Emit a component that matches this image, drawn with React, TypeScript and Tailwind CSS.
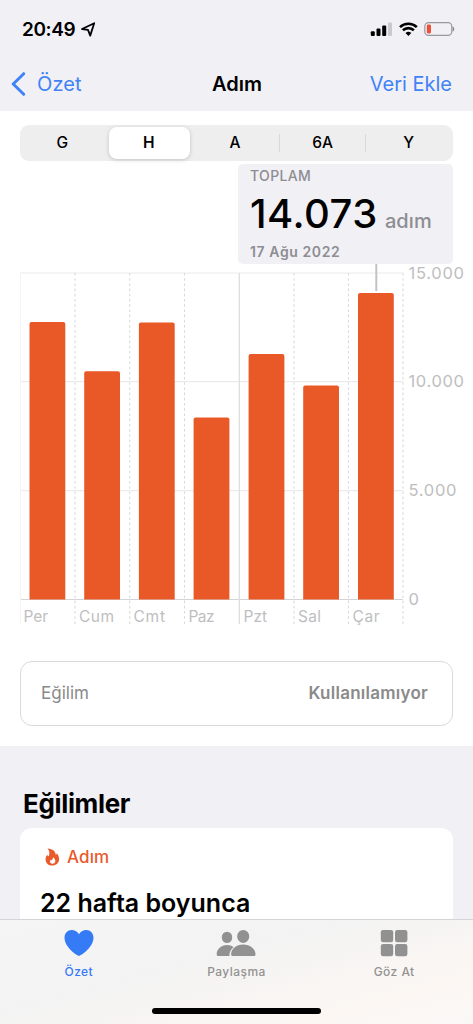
const days = [
  { name: 'Per', top: 322, left: 29.5, label: 23.5, width: 24.5 },
  { name: 'Cum', top: 371.3, left: 84.2, label: 79, width: 35 },
  { name: 'Cmt', top: 322.4, left: 138.9, label: 133.5, width: 31.5 },
  { name: 'Paz', top: 417.5, left: 193.6, label: 188.5, width: 26 },
  { name: 'Pzt', top: 354, left: 248.6, label: 243.5, width: 23.5 },
  { name: 'Sal', top: 385.5, left: 303.2, label: 298, width: 23 },
  { name: 'Çar', top: 293, left: 358, label: 352.5, width: 27 },
];

const scale = [
  { label: '15.000', y: 273, width: 55.5 },
  { label: '10.000', y: 381.7, width: 55.5 },
  { label: '5.000', y: 490.6, width: 48 },
  { label: '0', y: 599.5, width: 10 },
];

const dividers = [75, 129.7, 184.5, 294, 348.5, 403];

function StatusBar() {
  return (
    <div className="flex h-[58px] items-center justify-between pl-[22px] pr-[18px]">
      <div className="flex items-center gap-[5px]">
        <span className="text-[19px] font-semibold leading-none tracking-[-0.4px]">20:49</span>
        <svg width="16" height="16" viewBox="80 21 16 16">
          <path d="M94.200 23.200 82 29l6 .9L90.200 35.600Z" fill="none" stroke="#000" strokeWidth="1.8" strokeLinejoin="round" />
        </svg>
      </div>
      <svg width="85" height="16" viewBox="370 21 85 16">
        <rect x="370.8" y="31.2" width="4" height="4.8" rx="1.1" />
        <rect x="376.5" y="28.5" width="4" height="7.5" rx="1.1" />
        <rect x="382.2" y="25.4" width="4" height="10.6" rx="1.1" />
        <rect x="388" y="22.5" width="4" height="13.5" rx="1.1" fill="#cacace" />
        <path d="M400 27.1a12.2 12.2 0 0 1 16.8 0M402.9 30.3a8.1 8.1 0 0 1 11 0" fill="none" stroke="#000" strokeWidth="2.6" />
        <path d="M405.5 33a4.3 4.3 0 0 1 5.8 0l-2.9 2.9Z" />
        <rect x="424.8" y="22.6" width="27" height="12.8" rx="3.8" fill="none" stroke="#99999d" strokeWidth="1.2" />
        <rect x="426.8" y="24.5" width="4.2" height="9" rx="1.4" fill="#e95239" />
        <path d="M453 26.8q2 2.2 0 4.4Z" fill="#8b8b8f" stroke="#8b8b8f" strokeWidth=".7" />
      </svg>
    </div>
  );
}

function Periods() {
  return (
    <div className="mx-5 mt-3.5 grid h-9 grid-cols-5 items-center rounded-[9px] bg-[#eeeeee] text-center text-[15.5px] font-medium leading-none">
      <span className="pr-0.5">G</span>
      <span className="ml-[2px] mr-[3px] flex h-8 items-center justify-center rounded-[8px] bg-white pr-px font-semibold shadow-[0_1px_4px_rgba(0,0,0,0.18)]">H</span>
      <span className="flex h-[18px] items-center justify-center border-r border-[#d8d8da] pr-0.5">A</span>
      <span className="flex h-[18px] items-center justify-center border-r border-[#d8d8da]">6A</span>
      <span className="pr-0.5">Y</span>
    </div>
  );
}

function Chart() {
  return (
    <svg width="473" height="376" viewBox="0 264 473 376" className="block shrink-0" fontFamily="Inter, sans-serif">
      {scale.map((s) => (
        <g key={s.label}>
          <path d={`M20 ${s.y}H403`} stroke={s.label === '0' ? '#d4d4d6' : '#ebebed'} strokeWidth="1.2" />
          <text x="408.5" y={s.y + 5.7} fontSize="16.5" fill="#bebec0" textLength={s.width} lengthAdjust="spacing">{s.label}</text>
        </g>
      ))}
      <path d="M20.5 273V624" stroke="#f5f5f6" />
      {dividers.map((x) => (
        <path key={x} d={`M${x} 273V624`} stroke="#dadadd" strokeWidth="1.1" strokeDasharray="2.6 2.6" />
      ))}
      <path d="M239.3 273V624" stroke="#dededf" strokeWidth="1.3" />
      <path d="M376.3 264V291" stroke="#c2c2c5" strokeWidth="2" />
      {days.map((d) => (
        <g key={d.name}>
          <path d={`M${d.left} 599.5V${d.top + 2}q0-2 2-2h31.8q2 0 2 2V599.5Z`} fill="#e95827" />
          <text x={d.label} y="621.7" fontSize="15.5" fill="#bebec0" textLength={d.width} lengthAdjust="spacing">{d.name}</text>
        </g>
      ))}
    </svg>
  );
}

function TabBar() {
  return (
    <nav className="h-[105px] shrink-0 border-t border-[#d5d5d7] bg-[linear-gradient(165deg,#f5f5f6_0%,#f3f3f3_40%,#fcf7f3_80%,#faf8f7_100%)]">
      <div className="grid grid-cols-3 text-center text-[12px] font-medium leading-none tracking-[0.45px] text-[#929292]">
        <div className="flex flex-col items-center pt-[9px] text-[#367bf6]">
          <svg width="30" height="28" viewBox="0 0 30 28"><path d="M15 27C13.5 27 .5 18.5.5 8.8.5 4.2 3.7 1 7.6 1 11 1 13.6 2.800 15 5.200 16.400 2.800 19 1 22.400 1c3.900 0 7.100 3.200 7.100 7.800C29.500 18.500 16.500 27 15 27Z" fill="currentColor" /></svg>
          <span className="mt-[9px]">Özet</span>
        </div>
        <div className="flex flex-col items-center pt-[9px]">
          <svg width="40" height="28" viewBox="0 0 40 28" fill="#919191">
            <ellipse cx="11" cy="8.4" rx="5.2" ry="5.700" />
            <ellipse cx="27.200" cy="7.400" rx="6" ry="6.500" />
            <path d="M.7 25.200C.7 20.500 5 16.100 11 16.100c2.700 0 4.900.8 6.500 2.100-2.700 2-4.200 4.800-4.100 8.900H2.200C1.200 27.100.7 26.500.7 25.200Z" />
            <path d="M15.100 25.300c0-4.900 4.900-9.700 12.100-9.700s12.300 4.800 12.300 9.700c0 1.200-.5 1.800-1.700 1.800H16.800c-1.200 0-1.700-.6-1.700-1.800Z" />
          </svg>
          <span className="mt-[9px]">Paylaşma</span>
        </div>
        <div className="flex flex-col items-center pt-[9px]">
          <svg width="28" height="28" viewBox="0 0 28 28" fill="#919191">
            <rect x=".8" y="1" width="12.400" height="12.200" rx="2.300" />
            <rect x="15" y="1" width="12.400" height="12.200" rx="2.300" />
            <rect x=".8" y="15" width="12.400" height="12.200" rx="2.300" />
            <rect x="15" y="15" width="12.400" height="12.200" rx="2.300" />
          </svg>
          <span className="mt-[9px]">Göz At</span>
        </div>
      </div>
      <div className="mx-auto mt-[30px] h-1.5 w-[169px] rounded-full bg-black" />
    </nav>
  );
}

export default function App() {
  return (
    <div className="flex h-[1024px] w-[473px] flex-col overflow-hidden bg-[#f1f0f5] font-['Inter',sans-serif] text-black">
      <header className="h-[111px] shrink-0">
        <StatusBar />
        <div className="grid h-[52px] grid-cols-3 items-center pl-[11px] pr-[21px] text-[20px] leading-none">
          <span className="flex items-center gap-[11px] tracking-[0.1px] text-[#3f83f7]">
            <svg width="15" height="24" viewBox="0 0 15 24"><path d="M12.700 1.700 2.200 12l10.500 10.300" fill="none" stroke="currentColor" strokeWidth="3" strokeLinecap="round" strokeLinejoin="round" /></svg>
            Özet
          </span>
          <span className="pl-[11px] text-center font-semibold tracking-[0px]">Adım</span>
          <span className="text-right tracking-[0px] text-[#3f83f7]">Veri Ekle</span>
        </div>
      </header>
      <main className="flex h-[635px] shrink-0 flex-col bg-white">
        <Periods />
        <section className="ml-[238px] mt-[3px] h-[100px] w-[215px] shrink-0 rounded-[5px] bg-[#f1f0f5] pl-3 leading-none text-[#8d8d92]">
          <p className="pt-[4px] text-[14px] font-medium leading-[15px] tracking-[0.35px]">TOPLAM</p>
          <p className="mt-[10px] flex h-[42px] items-baseline gap-[7px] leading-[42px]">
            <span className="text-[40px] font-medium tracking-[0.5px] text-black">14.073</span>
            <span className="text-[20px] font-medium tracking-[0.1px]">adım</span>
          </p>
          <p className="mt-[9px] text-[14px] font-semibold leading-[16px] tracking-[0.6px]">17 Ağu 2022</p>
        </section>
        <Chart />
        <div className="mx-5 mt-[21px] flex h-[65px] shrink-0 items-center justify-between rounded-[12px] border-[1.5px] border-[#dadada] pl-5 pr-6 text-[17px] leading-none text-[#8a8a8a]">
          <span>Eğilim</span>
          <span className="font-semibold tracking-[0.25px]">Kullanılamıyor</span>
        </div>
      </main>
      <section className="min-h-0 flex-1 overflow-hidden">
        <h2 className="ml-[23px] mt-[43px] text-[26px] font-bold leading-[30px] tracking-[-0.35px]">Eğilimler</h2>
        <div className="mx-5 mt-[9px] h-32 rounded-[12px] bg-white pl-[20px] pt-[18px]">
          <div className="flex h-[22px] items-center gap-[7px] pl-[5px] text-[17px] font-medium leading-none text-[#e95b2d]">
            <svg width="15" height="18" viewBox="0 0 15 18"><path fillRule="evenodd" fill="currentColor" d="M2.500.5C7.800.8 10.800 3.700 10.800 7c.6-.4.8-1 .8-1.800 1.700 1.600 2.500 3.500 2.500 5.900 0 4-3 6.500-6.800 6.500S.6 15.200.6 11.500c0-1.900.6-3.600 1.700-4.700.2 1 .7 1.400 1.400 1.500C4.800 5.500 4.700 2.800 2.500.5ZM8 9.200c.1 1.600-.7 2.200-1.300 3.300-.5-.2-.7-.6-.8-1-1.400 1.700-1 4.200 1.500 4.200 1.900 0 3-1.200 2.900-2.700-.1-1.700-1-3-2.300-3.800Z" /></svg>
            <span className="tracking-[0.1px]">Adım</span>
          </div>
          <p className="mt-[19px] text-[25px] font-semibold leading-[32px] tracking-[0px]">22 hafta boyunca</p>
        </div>
      </section>
      <TabBar />
    </div>
  );
}
